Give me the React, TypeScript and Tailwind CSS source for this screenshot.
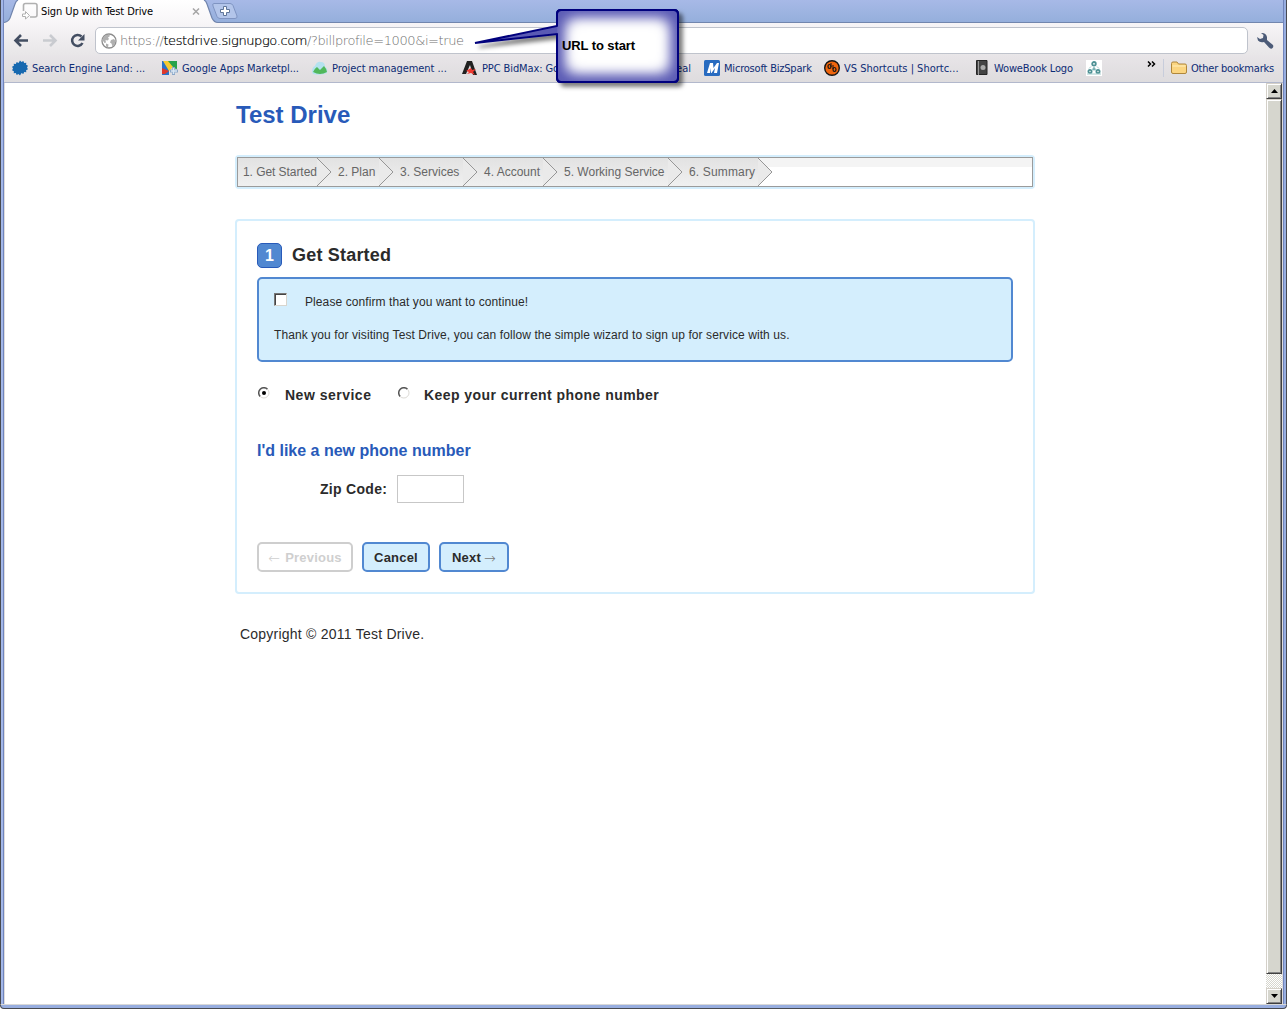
import React from 'react';

function Globe() {
  return (
    <svg width="16" height="16" viewBox="0 0 16 16" className="shrink-0">
      <circle cx="8" cy="8" r="7" fill="#fff" stroke="#8c8c8c" strokeWidth="1.3" />
      <path d="M2 5 4.500 2 8 1.500 9 3 7 4.500 8 6 6.500 7.500 4.500 7 5 9.500 3.500 10 1.500 7ZM10 7l3-1 1.500 2-1 4-2 1.500-1-3-1.500-1ZM5 10.500l2.500 1L7 14.500 5 13.500Z" fill="#b0b0b0" />
    </svg>
  );
}

function TabStrip() {
  return (
    <svg width="260" height="24" viewBox="0 0 260 24" className="block">
      <defs>
        <linearGradient id="tab" x1="0" y1="0" x2="0" y2="1">
          <stop offset="0" stopColor="#ffffff" />
          <stop offset="1" stopColor="#f7f5f7" />
        </linearGradient>
      </defs>
      <path d="M4 24V22.500Q8 22 10 18L15 4Q16 1 18 0H204Q206 1 207 4L212 18Q214 22.500 218 22.500H260V24Z" fill="url(#tab)" />
      <path d="M4 22.500Q8 22 10 18L15 4Q16 1 18 0M204 0Q206 1 207 4L212 18Q214 22.500 218 22.500H260" fill="none" stroke="#7185ad" strokeWidth="1.2" />
      <path d="M214 3.500H230Q232 3.500 233 5.500L237 16Q237.500 18.500 235 18.500H220Q218 18.500 217 16.500L213 6Q212 3.500 214 3.500Z" fill="#b3c5ea" stroke="#7f94c2" />
      <path d="M223.500 6.500h3v3h3v3h-3v3h-3v-3h-3v-3h3Z" fill="#fff" stroke="#5f7599" />
      <path d="M23.500 11V5.500Q23.500 3.500 25.500 3.500H35Q37 3.500 37 5.500V15Q37 17 35 17H30" fill="none" stroke="#b0b0b0" strokeWidth="1.6" />
      <path d="M22.500 14h3v-2.500l4 4-4 3.500v-2.500h-3Z" fill="#fff" stroke="#b0b0b0" />
      <path d="M193 8.500l6 6M199 8.500l-6 6" stroke="#a5a5a5" strokeWidth="1.5" />
    </svg>
  );
}

const linkClass = 'flex items-center h-4 shrink-0 text-[11px] leading-4 text-[#0d2c75] whitespace-nowrap';

function Bookmarks() {
  return (
    <div className="flex h-[28px] items-center border-b border-[#b2b8cc] bg-gradient-to-b from-[#e8e5e8] to-[#dedcde] pl-2 pb-px font-['DejaVu_Sans_Condensed','DejaVu_Sans',sans-serif]">
      <div className={linkClass + ' w-[150px] gap-1'}>
        <svg width="16" height="16" viewBox="0 0 16 16"><path d="M8 .5l1.500 1.500 1.800-1 .9 1.900 2.100-.2-.2 2.100 1.900.9-1 1.800 1 1.800-1.900.9.200 2.100-2.100-.2-.9 1.900-1.800-1L8 15.500 6.500 14l-1.800 1-.9-1.900-2.100.2.200-2.100L0 10.300l1-1.800L0 6.700l1.900-.9-.2-2.100 2.100.2.900-1.900 1.800 1Z" fill="#1769b0" /></svg>
        <span className="mt-[2px] tracking-[-0.05px]">Search Engine Land: ...</span>
      </div>
      <div className={linkClass + ' w-[150px] gap-1'}>
        <svg width="16" height="16" viewBox="0 0 16 16"><path d="M0 1h7v14H0Z" fill="#2772c9" /><path d="M5 1h10v8l-5-1Z" fill="#27a24b" /><path d="M1 1h5l5 6-4 4Z" fill="#f5ca31" /><path d="M0 8l7 3-4 3H0Z" fill="#dd382b" /><path d="M11.500 7v8M8 11h8" stroke="#8ba7c8" strokeWidth="3" /><path d="M11.500 8v6M9 11h6" stroke="#d8e6f3" strokeWidth="1.500" /></svg>
        <span className="mt-[2px] tracking-[-0.05px]">Google Apps Marketpl...</span>
      </div>
      <div className={linkClass + ' w-[150px] gap-1'}>
        <svg width="16" height="16" viewBox="0 0 16 16"><path d="M0 12Q0 7 3 6 5 1 9 2q4 0 4 5 3 1 2 6Q8 16 1 14Z" fill="#b4e2ef" /><path d="M1 12Q3 8 5 7l3 3 4-4q2 2 3 6-7 4-14 0Z" fill="#51b85b" /></svg>
        <span className="mt-[2px] tracking-[-0.05px]">Project management ...</span>
      </div>
      <div className={linkClass + ' w-[242px] gap-1'}>
        <svg width="16" height="16" viewBox="0 0 16 16"><path d="M5 1h5l5 14h-4L8 5 4 14H0Z" fill="#202020" /><path d="M4 11l5-3 1 2 4-1-3 3 2 3-4-2-4 1 2-2Z" fill="#ef3a31" /></svg>
        <span className="mt-[2px] tracking-[-0.1px]">PPC BidMax: Go</span>
        <span className="ml-auto mr-[13px] mt-[2px]">eal</span>
      </div>
      <div className={linkClass + ' w-[120px] gap-1'}>
        <svg width="16" height="16" viewBox="0 0 16 16"><rect width="16" height="16" rx="1.500" fill="#286bc0" /><path d="M3 13 6 3h3l.5 5L13 3h2l-2 10h-3l1-5-3.500 5H7L6.500 8 6 13Z" fill="#fff" /></svg>
        <span className="mt-[2px] tracking-[-0.2px]">Microsoft BizSpark</span>
      </div>
      <div className={linkClass + ' w-[150px] gap-1'}>
        <svg width="16" height="16" viewBox="0 0 16 16"><circle cx="8" cy="8" r="7.300" fill="#ef650d" stroke="#151515" strokeWidth="1.400" /><ellipse cx="5.500" cy="6.500" rx="1.500" ry="2" fill="none" stroke="#151515" strokeWidth="1.200" /><ellipse cx="10.500" cy="9.500" rx="1.500" ry="2" fill="none" stroke="#151515" strokeWidth="1.200" /><path d="M7 7V3M9 9V5" stroke="#151515" /></svg>
        <span className="mt-[2px] tracking-[0px]">VS Shortcuts | Shortc...</span>
      </div>
      <div className={linkClass + ' w-[112px] gap-1'}>
        <svg width="16" height="16" viewBox="0 0 16 16"><path d="M2.500 .5h10.500v14H2.500Z" fill="#444" stroke="#252525" /><path d="M4.500 1v14" stroke="#999" /><circle cx="9" cy="7.500" r="2.500" fill="#aaa" /></svg>
        <span className="mt-[2px] tracking-[-0.15px]">WoweBook Logo</span>
      </div>
      <svg width="16" height="16" viewBox="0 0 16 16" className="shrink-0"><path d="M0 0h16v16H0Z" fill="#fff" /><g fill="none" stroke="#4f9295" strokeWidth="1.800"><circle cx="8" cy="3.800" r="1.800" /><circle cx="4" cy="11.500" r="1.600" /><circle cx="12" cy="11.500" r="1.600" /></g><path d="M8 7l2 3H6ZM1 14h14M3 8.500l2-2M13 8.500l-2-2" fill="#4f9295" stroke="#a3cccc" /></svg>
      <svg width="9" height="7" viewBox="0 0 9 7" className="mb-2 ml-[45px] shrink-0"><path d="M1 .5l2.500 2.500L1 5.500M5 .5l2.500 2.500L5 5.500" fill="none" stroke="#000" strokeWidth="1.500" /></svg>
      <div className="ml-[7px] mr-[7px] h-[18px] w-px bg-[#c8cddb]" />
      <div className={linkClass + ' gap-1'}>
        <svg width="16" height="16" viewBox="0 0 16 16"><path d="M.5 3.500Q.5 2 2 2h4l1.500 2H14q1.500 0 1.500 1.500V12q0 1.500-1.500 1.500H2Q.5 13.500.5 12Z" fill="#fbd581" stroke="#af873c" /><path d="M1.500 6h13" stroke="#fff0bd" /></svg>
        <span className="mt-[2px] tracking-[-0.2px]">Other bookmarks</span>
      </div>
    </div>
  );
}

function Step({ label, box, gap }: { label: string; box: string; gap: string }) {
  return (
    <div className={'flex h-[28px] shrink-0 bg-gradient-to-b from-[#e2e2e2] to-[#f0f0f0] ' + box}>
      <span className={'grow whitespace-nowrap pt-[6px] text-[12px] leading-4 text-[#666] ' + gap}>{label}</span>
    </div>
  );
}

function Chevron() {
  return (
    <svg width="15" height="28" viewBox="0 0 15 28" className="relative z-10 -mr-[15px] shrink-0">
      <path d="M0 0 14 14 0 28Z" fill="#eaeaea" />
      <path d="M0 0 14 14 0 28" fill="none" stroke="#969696" />
    </svg>
  );
}

function Steps() {
  return (
    <div className="mt-[24px] h-[34px] w-[800px] rounded-[4px] border-2 border-[#d4eefd]">
      <div className="flex h-[30px] border border-[#9b9b9b] bg-[linear-gradient(#f4f4f4_0_9px,#fff_9px)]">
        <Step label="1. Get Started" box="w-[79px]" gap="pl-[5px] tracking-[-0.06px]" />
        <Chevron />
        <Step label="2. Plan" box="w-[62px]" gap="pl-[21px]" />
        <Chevron />
        <Step label="3. Services" box="w-[84px]" gap="pl-[21px]" />
        <Chevron />
        <Step label="4. Account" box="w-[80px]" gap="pl-[21px]" />
        <Chevron />
        <Step label="5. Working Service" box="w-[125px]" gap="pl-[21px]" />
        <Chevron />
        <Step label="6. Summary" box="w-[90px]" gap="pl-[21px] tracking-[0.15px]" />
        <Chevron />
      </div>
    </div>
  );
}

function Radio({ on }: { on?: boolean }) {
  return (
    <svg width="12" height="12" viewBox="0 0 12 12" className="mt-[-4px] shrink-0">
      <circle cx="6" cy="6" r="5" fill="#fff" />
      <path d="M2.200 9.500A5 5 0 0 1 9.500 2.200" fill="none" stroke="#555" strokeWidth="1.500" />
      <path d="M2.200 9.500A5 5 0 0 0 9.500 2.200" fill="none" stroke="#dcdad5" />
      {on && <circle cx="6" cy="6" r="2" fill="#000" />}
    </svg>
  );
}

function Wizard() {
  return (
    <div className="mt-[30px] h-[375px] w-[800px] rounded-[4px] border-2 border-[#d4eefd] px-5 pt-[22px] text-[#2b2b2b]">
      <div className="flex h-[25px] items-center">
        <div className="flex h-[25px] w-[25px] items-center justify-center rounded-[5px] border border-[#285ab9] bg-[#5188d1] text-[16px] font-bold text-white">1</div>
        <h2 className="-mt-[2px] ml-[10px] text-[18px] font-bold leading-5 tracking-[0.2px]">Get Started</h2>
      </div>
      <div className="mt-[9px] h-[85px] w-[756px] rounded-[5px] border-2 border-[#5188d1] bg-[#d4eefd] pl-[15px] pt-[14px] text-[12px] leading-4 tracking-[0.09px]">
        <div className="flex">
          <div className="h-[13px] w-[13px] border border-b-[#d8d5ce] border-l-[#777] border-r-[#d8d5ce] border-t-[#777] bg-white shadow-[inset_1px_1px_0_#444]" />
          <span className="ml-[18px] mt-px whitespace-nowrap">Please confirm that you want to continue!</span>
        </div>
        <p className="mt-[17px] whitespace-nowrap">Thank you for visiting Test Drive, you can follow the simple wizard to sign up for service with us.</p>
      </div>
      <div className="mt-[24px] flex h-[18px] items-center whitespace-nowrap text-[14px] font-bold">
        <div className="flex w-[141px] items-center pl-px"><Radio on /><span className="ml-[15px] tracking-[0.5px]">New service</span></div>
        <div className="flex items-center"><Radio /><span className="ml-[14px] tracking-[0.45px]">Keep your current phone number</span></div>
      </div>
      <h3 className="mt-[37px] whitespace-nowrap text-[16px] font-bold leading-5 text-[#285ab9]">I'd like a new phone number</h3>
      <div className="mt-[14px] flex h-[28px] items-center pl-[63px] text-[14px] font-bold">
        <span className="w-[77px] whitespace-nowrap tracking-[0.3px]">Zip Code:</span>
        <div className="h-[28px] w-[67px] border border-[#c7c7c7] bg-white" />
      </div>
      <div className="mt-[39px] flex h-[30px] gap-[9px] whitespace-nowrap text-[13px] font-bold tracking-[0.2px]">
        <div className="flex w-[96px] items-center justify-center rounded-[5px] border-2 border-[#cecece] pt-px text-[#cfcfcf]"><span className="mr-[5px] font-['DejaVu_Sans_Light','DejaVu_Sans'] text-[14px] font-extralight leading-4">←</span>Previous</div>
        <div className="flex w-[68px] items-center justify-center rounded-[5px] border-2 border-[#5188d1] bg-[#d4eefd] pt-px">Cancel</div>
        <div className="flex w-[70px] items-center justify-center rounded-[5px] border-2 border-[#5188d1] bg-[#d4eefd] pt-px">Next<span className="ml-[3px] font-['DejaVu_Sans_Light','DejaVu_Sans'] text-[14px] font-extralight leading-4 text-[#777]">→</span></div>
      </div>
    </div>
  );
}

function ScrollButton({ down }: { down?: boolean }) {
  return (
    <div className="flex h-[16px] w-[16px] shrink-0 items-center justify-center border border-b-[#404040] border-l-[#d4d0c8] border-r-[#404040] border-t-[#d4d0c8] bg-[#d6d6ce] shadow-[inset_1px_1px_0_#fff,inset_-1px_-1px_0_#858585]">
      <svg width="7" height="4" viewBox="0 0 7 4"><path d={down ? 'M0 0h7L3.500 4Z' : 'M0 4h7L3.500 0Z'} fill="#000" /></svg>
    </div>
  );
}

export default function App() {
  return (
    <div className="relative flex h-[1009px] w-[1287px] flex-col overflow-hidden bg-white font-['Liberation_Sans',sans-serif]">
      <div className="flex min-h-0 grow border-l border-r border-[#484a50] bg-[#98aee0]">
        <div className="w-[2px] shrink-0 bg-[#a3b7e8]" />
        <div className="w-px shrink-0 bg-[#7185bd]" />
        <div className="flex min-w-0 grow flex-col">
          <div className="relative h-[23px] shrink-0 border-b border-[#7286ae] bg-gradient-to-b from-[#a7b9e7] to-[#95afdc]">
            <div className="absolute left-[-4px] top-0"><TabStrip /></div>
            <span className="absolute left-[37px] top-[4px] whitespace-nowrap font-['DejaVu_Sans_Condensed','DejaVu_Sans',sans-serif] text-[11px] leading-4 tracking-[-0.1px] text-black">Sign Up with Test Drive</span>
          </div>
          <div className="flex h-[32px] shrink-0 items-center bg-gradient-to-b from-[#f7f5f7] to-[#e8e6e8] pt-[3px]">
            <svg width="91" height="20" viewBox="0 0 91 20" className="shrink-0" fill="none">
              <path d="M24 9.500H12M17 4l-5.500 5.500L17 15" stroke="#434e62" strokeWidth="2.600" />
              <path d="M39 9.500h12M46 4l5.500 5.500L46 15" stroke="#c9cbd0" strokeWidth="2.600" />
              <path d="M77.500 5.500A5.500 5.500 0 1 0 78.500 12" stroke="#434e62" strokeWidth="2.500" />
              <path d="M80.500 3v6.500H74Z" fill="#434e62" />
            </svg>
            <div className="flex h-[27px] w-[1153px] shrink-0 items-center rounded-[5px] border border-[#bfc3cc] bg-white pl-[5px]">
              <Globe />
              <span className="ml-[3px] whitespace-nowrap font-['DejaVu_Sans_Light','DejaVu_Sans',sans-serif] text-[13px] font-extralight leading-5 tracking-[-0.4px] text-[#707070]">https://<span className="text-black [-webkit-text-stroke:0.2px_#000]">testdrive.signupgo.com</span>/?billprofile=1000&amp;i=true</span>
            </div>
            <svg width="18" height="18" viewBox="0 0 18 18" className="ml-[8px] shrink-0"><path d="M6 1q4 0 5 4v3l6 5q1 2-1 3.500-2 .5-3-1L8 10q-4 1-6-1.500L1 5l3 2 3-1 .5-3L5 1Z" fill="#4c5b78" /></svg>
          </div>
          <Bookmarks />
          <div className="flex min-h-0 grow border-l border-r border-[#dedcdc] bg-white">
            <div className="min-w-0 grow pl-[230px] pt-[18px]">
              <h1 className="ml-px h-[30px] whitespace-nowrap text-[24px] font-bold leading-[28px] text-[#285ab9]">Test Drive</h1>
              <Steps />
              <Wizard />
              <p className="ml-[5px] mt-[30px] whitespace-nowrap text-[14px] leading-5 tracking-[0.23px] text-[#2b2b2b]">Copyright © 2011 Test Drive.</p>
            </div>
            <div className="flex w-[16px] shrink-0 flex-col bg-[repeating-conic-gradient(#fff_0_25%,#d6d6ce_0_50%)] bg-[length:2px_2px]">
              <ScrollButton />
              <div className="h-[875px] w-[16px] shrink-0 border border-b-[#404040] border-l-[#d4d0c8] border-r-[#404040] border-t-[#d4d0c8] bg-[#d6d6ce] shadow-[inset_1px_1px_0_#fff,inset_-1px_-1px_0_#858585]" />
              <div className="mt-auto"><ScrollButton down /></div>
            </div>
          </div>
        </div>
        <div className="w-[3px] shrink-0 border-l border-[#7185bd] bg-[#98aee0]" />
      </div>
      <div className="h-[5px] shrink-0 rounded-b-[4px] border-b border-l border-r border-t border-b-[#484a50] border-l-[#484a50] border-r-[#484a50] border-t-[#d8d8d8] bg-[#98aee0]" />
      <div className="absolute left-[470px] top-[4px] h-[90px] w-[220px]">
        <svg width="220" height="90" viewBox="0 0 220 90" className="absolute left-0 top-0">
          <defs>
            <filter id="shadow" x="-20%" y="-20%" width="150%" height="160%"><feDropShadow dx="4" dy="4" stdDeviation="2" floodColor="#000" floodOpacity=".5" /></filter>
            <filter id="soft" x="-20%" y="-30%" width="140%" height="160%"><feGaussianBlur stdDeviation="7" /></filter>
            <clipPath id="box"><rect x="87" y="6" width="120" height="72" rx="4" /></clipPath>
          </defs>
          <path d="M91 6H204Q208 6 208 10V74Q208 78 204 78H91Q87 78 87 74V30L5 39 87 22V10Q87 6 91 6Z" fill="#5a5ab4" stroke="#00007d" strokeWidth="2" filter="url(#shadow)" />
          <g clipPath="url(#box)"><rect x="97" y="16" width="101" height="52" rx="5" fill="#fff" filter="url(#soft)" /><rect x="101" y="20" width="93" height="44" fill="#fff" filter="url(#soft)" /></g>
          <path d="M91 6H204Q208 6 208 10V74Q208 78 204 78H91Q87 78 87 74V30M87 22V10Q87 6 91 6" fill="none" stroke="#00007d" strokeWidth="2" />
        </svg>
        <span className="absolute left-[92px] top-[34px] whitespace-nowrap text-[13px] font-bold leading-4 tracking-[-0.1px] text-black">URL to start</span>
      </div>
    </div>
  );
}
